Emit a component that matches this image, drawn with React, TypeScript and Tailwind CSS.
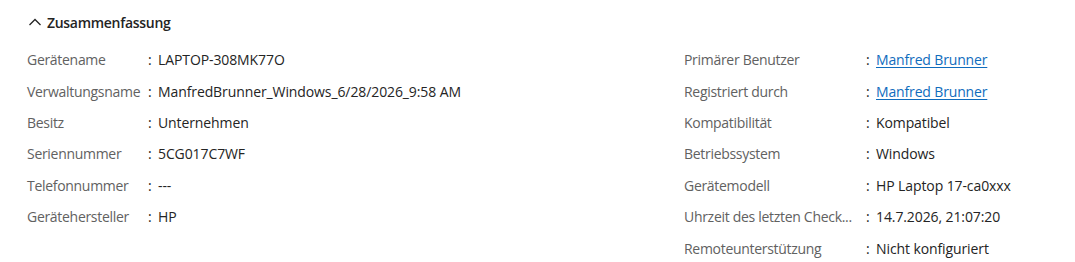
import React from "react";

type Row = { label: string; value: string; link?: boolean; full?: string };

const left: Row[] = [
  { label: "Gerätename", value: "LAPTOP-308MK77O" },
  { label: "Verwaltungsname", value: "ManfredBrunner_Windows_6/28/2026_9:58 AM" },
  { label: "Besitz", value: "Unternehmen" },
  { label: "Seriennummer", value: "5CG017C7WF" },
  { label: "Telefonnummer", value: "---" },
  { label: "Gerätehersteller", value: "HP" },
];

const right: Row[] = [
  { label: "Primärer Benutzer", value: "Manfred Brunner", link: true },
  { label: "Registriert durch", value: "Manfred Brunner", link: true },
  { label: "Kompatibilität", value: "Kompatibel" },
  { label: "Betriebssystem", value: "Windows" },
  { label: "Gerätemodell", value: "HP Laptop 17-ca0xxx" },
  { label: "Uhrzeit des letzten Check...", full: "Uhrzeit des letzten Check-ins", value: "14.7.2026, 21:07:20" },
  { label: "Remoteunterstützung", value: "Nicht konfiguriert" },
];

export default function App() {
  return (
    <div
      className="w-[1075px] h-[262px] bg-white text-[14px] overflow-hidden"
      style={{ fontFamily: "'Open Sans', sans-serif" }}
    >
      <div className="flex items-center gap-[5px] pl-[28px] h-[44px]">
        <svg width="14" height="10" viewBox="0 0 14 10" className="text-[#242424]">
          <path d="M1.5 8 L7 2.5 L12.5 8" fill="none" stroke="currentColor" strokeWidth="1.3" />
        </svg>
        <span className="font-semibold text-[#242424] tracking-[-0.3px]">Zusammenfassung</span>
      </div>

      {/* Details */}
      <div className="flex pl-[27px]">
        <Column rows={left} labelWidth="w-[121px]" width="w-[657px]" />
        <Column rows={right} labelWidth="w-[182px]" width="w-[360px]" />
      </div>
    </div>
  );
}

function Column({ rows, labelWidth, width }: { rows: Row[]; labelWidth: string; width: string }) {
  return (
    <div className={`flex flex-col ${width}`}>
      {rows.map((r) => (
        <div key={r.label} className="flex items-center h-[31.4px]">
          <span title={r.full} className={`${labelWidth} shrink-0 whitespace-nowrap tracking-[-0.3px] text-[#616161]`}>
            {r.label}
          </span>
          <span className="w-[10px] shrink-0 text-[#242424]">:</span>
          {r.link ? (
            <a href="#" className="text-[#0f6cbd] underline underline-offset-2 tracking-[-0.15px]">
              {r.value}
            </a>
          ) : (
            <span className="text-[#242424] whitespace-nowrap tracking-[-0.1px]">{r.value}</span>
          )}
        </div>
      ))}
    </div>
  );
}
